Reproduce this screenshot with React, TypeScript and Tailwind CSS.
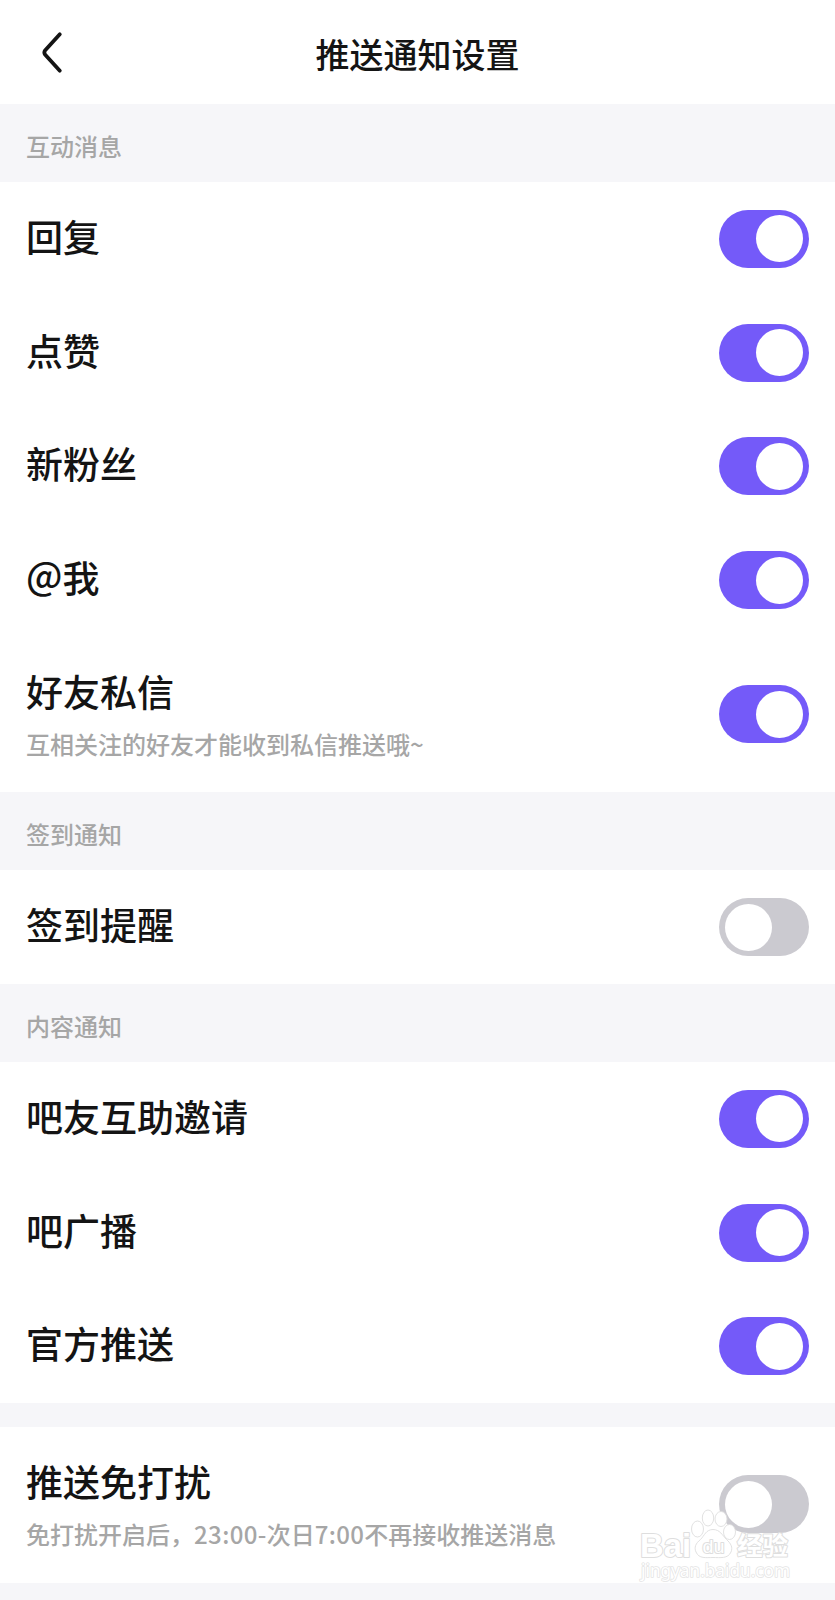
import React, { useState } from "react";

type Item = { id: string; title: React.ReactNode; label: string; hint?: React.ReactNode; on: boolean };
type Group = { heading?: string; items: Item[] };

const groups: Group[] = [
  {
    heading: "互动消息",
    items: [
      { id: "reply", title: "回复", label: "回复", on: true },
      { id: "like", title: "点赞", label: "点赞", on: true },
      { id: "fans", title: "新粉丝", label: "新粉丝", on: true },
      {
        id: "mention",
        title: (
          <>
            <span className="relative -top-[3px] text-[37.5px] leading-none">@</span>我
          </>
        ),
        label: "@我",
        on: true,
      },
      { id: "message", title: "好友私信", label: "好友私信", hint: "互相关注的好友才能收到私信推送哦~", on: true },
    ],
  },
  { heading: "签到通知", items: [{ id: "checkin", title: "签到提醒", label: "签到提醒", on: false }] },
  {
    heading: "内容通知",
    items: [
      { id: "invite", title: "吧友互助邀请", label: "吧友互助邀请", on: true },
      { id: "broadcast", title: "吧广播", label: "吧广播", on: true },
      { id: "official", title: "官方推送", label: "官方推送", on: true },
    ],
  },
  {
    items: [
      {
        id: "dnd",
        title: "推送免打扰",
        label: "推送免打扰",
        hint: (
          <>
            免打扰开启后，<span className="tracking-[0.4px]">23:00-</span>次日
            <span className="tracking-[0.3px]">7:00</span>不再接收推送消息
          </>
        ),
        on: false,
      },
    ],
  },
];

function Toggle({ label, initial }: { label: string; initial: boolean }) {
  const [on, setOn] = useState(initial);
  return (
    <button
      type="button"
      role="switch"
      aria-checked={on}
      aria-label={label}
      onClick={() => setOn(!on)}
      className={`flex h-[58px] w-[90.5px] shrink-0 items-center rounded-full px-[6px] ${
        on ? "justify-end bg-[#745af9]" : "justify-start bg-[#cbcad0]"
      }`}
    >
      <span className="size-[47px] rounded-full bg-white" />
    </button>
  );
}

function Row({ item }: { item: Item }) {
  return (
    <div
      className={`flex items-center justify-between px-[26px] ${
        item.hint ? "h-[155.3px] pb-[1px]" : "h-[113.75px]"
      }`}
    >
      <div className={item.hint ? "flex flex-col gap-[13px] pt-[2px]" : "pb-[6px]"}>
        <div className="text-[37px] leading-[44px] font-medium text-[#141414]">{item.title}</div>
        {item.hint && <div className="text-[24px] leading-[36px] font-medium text-[#a6a6a6]">{item.hint}</div>}
      </div>
      <Toggle label={item.label} initial={item.on} />
    </div>
  );
}

function Watermark() {
  return (
    <svg
      className="pointer-events-none absolute top-[1500px] left-[630px]"
      width="180"
      height="90"
      viewBox="0 0 180 90"
      fill="#ffffff"
      stroke="#dedede"
      strokeWidth="0.9"
    >
      <ellipse cx="67.5" cy="29" rx="6" ry="8" />
      <ellipse cx="78" cy="18" rx="5.7" ry="8" />
      <ellipse cx="91" cy="19" rx="6" ry="7.5" />
      <ellipse cx="99.5" cy="32" rx="6" ry="7.5" />
      <path d="M83 29.5c-7 0-8.500 6-12.500 10-5 4-6.500 8-4.500 12.500 3 7 10 5.500 17 5.500s15 1.500 18-5.500c2-4.500 0-8.500-4.500-12.500-4-4-6.500-10-13.500-10Z" />
      <g paintOrder="stroke" strokeWidth="2" strokeLinejoin="round">
        <text x="10" y="56.500" fontSize="33" fontWeight="700" textLength="51" lengthAdjust="spacingAndGlyphs" fontFamily="Liberation Sans, sans-serif">
          Bai
        </text>
        <text x="72.500" y="53" fontSize="19" textLength="22" lengthAdjust="spacingAndGlyphs" fontFamily="Liberation Sans, sans-serif">
          du
        </text>
        <text x="107" y="55" fontSize="25.500" fontWeight="700" fontFamily="Noto Sans CJK SC, sans-serif">
          经验
        </text>
      </g>
      <text x="11" y="76.500" fontSize="17.500" textLength="149" lengthAdjust="spacingAndGlyphs" paintOrder="stroke" stroke="#e4e4e4" strokeWidth="1.6" strokeLinejoin="round" fontFamily="Noto Sans, sans-serif">
        jingyan.baidu.com
      </text>
    </svg>
  );
}

export default function App() {
  return (
    <div className="relative h-[1600px] w-full overflow-hidden bg-[#f6f6f9] font-['Noto_Sans_CJK_SC',sans-serif]">
      <header className="grid h-[104px] grid-cols-[1fr_auto_1fr] items-center bg-white">
        <button type="button" aria-label="返回" className="justify-self-start pl-[40px]">
          <svg width="24" height="44" viewBox="0 0 24 44" fill="none" stroke="#141414" strokeWidth="3.8" strokeLinecap="round" strokeLinejoin="round">
            <path d="M19.8 4.300 5 20.500Q3.700 22.500 5 24.500L19.800 40.700" />
          </svg>
        </button>
        <h1 className="pt-[4px] text-[34px] leading-[50px] font-medium text-[#141414]">推送通知设置</h1>
      </header>
      {groups.map((group, i) => (
        <section key={i}>
          {group.heading ? (
            <h2 className="flex h-[78px] items-center px-[26px] pt-[6px] text-[24px] leading-[36px] font-medium text-[#a6a6a6]">
              {group.heading}
            </h2>
          ) : (
            <div className="h-[24px]" />
          )}
          <div className="bg-white">
            {group.items.map((item) => (
              <Row key={item.id} item={item} />
            ))}
          </div>
        </section>
      ))}
      <Watermark />
    </div>
  );
}
